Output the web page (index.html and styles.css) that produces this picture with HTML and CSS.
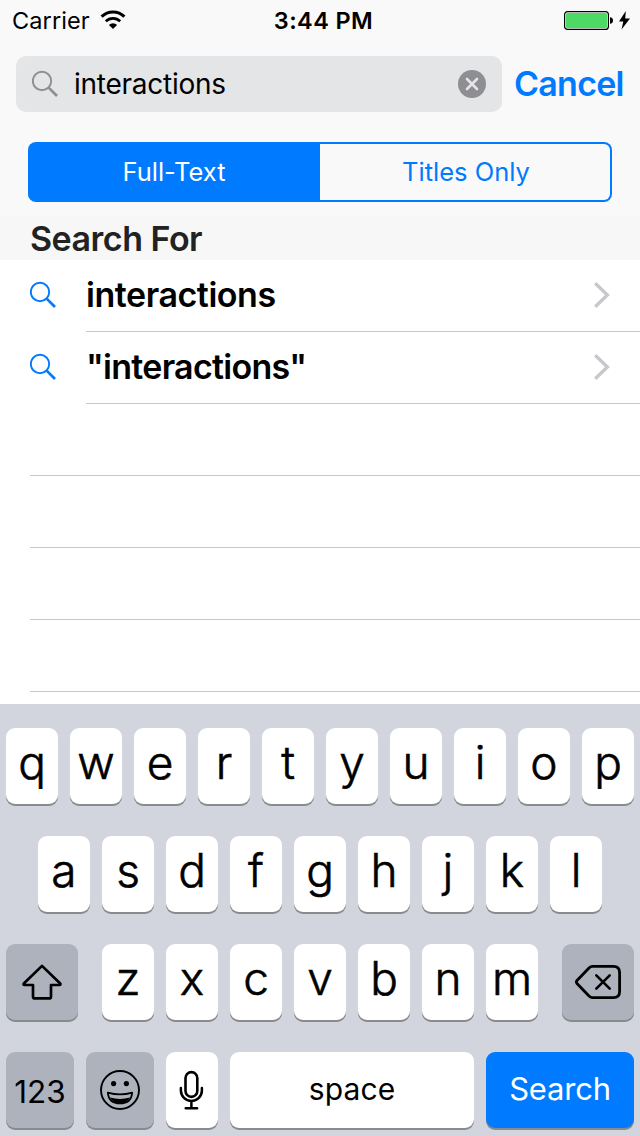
FILE: index.html
```html
<!DOCTYPE html>
<html lang="en">
<head>
<meta charset="utf-8">
<title>Search</title>
<link rel="stylesheet" href="styles.css">
</head>
<body>
<svg width="0" height="0" class="defs">
  <symbol id="magnifier" viewBox="0 0 28 28"><circle cx="10" cy="11" r="9.2" fill="none" stroke="currentColor" stroke-width="1.9"/><path d="M16.4 17.4L25 26" stroke="currentColor" stroke-width="2.7"/></symbol>
  <symbol id="chevron" viewBox="0 0 16 26"><path d="M1.2 1.2L13.4 13L1.2 24.8" fill="none" stroke="currentColor" stroke-width="3.3"/></symbol>
</svg>
<div class="screen">
  <header class="status">
    <div class="status-left"><span class="carrier">Carrier</span>
      <svg class="wifi" width="26" height="20" viewBox="0 0 26 20"><path d="M1.6 6.6A16.2 16.2 0 0 1 24.4 6.6" fill="none" stroke="#000" stroke-width="3"/><path d="M5.8 11.3A10.2 10.2 0 0 1 20.2 11.3" fill="none" stroke="#000" stroke-width="2.7"/><path d="M13 19L8.9 14.9A5.8 5.8 0 0 1 17.1 14.9Z"/></svg>
    </div>
    <div class="time">3:44 PM</div>
    <div class="status-right">
      <svg width="68" height="20" viewBox="0 0 68 20"><rect x=".6" y=".6" width="43.8" height="17.8" rx="3" fill="none" stroke="#000" stroke-width="1.2"/><rect x="2" y="2" width="41" height="15" rx="1.6" fill="#4cd964"/><path d="M46 6.2Q49 6.4 49 9.5T46 12.8Z"/><path d="M61.8 0L55 10.6h4.3L57.5 18.4L66 7.5h-4.8Z"/></svg>
    </div>
  </header>
  <div class="search-bar">
    <div class="field">
      <svg class="glass" width="28" height="28"><use href="#magnifier"/></svg>
      <span class="query">interactions</span>
      <svg width="28" height="28" viewBox="0 0 28 28"><circle cx="14" cy="14" r="14" fill="#8e8e93"/><path d="M9 9L19 19M19 9L9 19" stroke="#e4e5e7" stroke-width="2.6" stroke-linecap="round"/></svg>
    </div>
    <span class="cancel">Cancel</span>
  </div>
  <div class="segments">
    <div class="segment selected"><span>Full-Text</span></div>
    <div class="segment"><span>Titles Only</span></div>
  </div>
  <h2 class="section"><span>Search For</span></h2>
  <main class="list">
    <div class="row"><svg class="row-icon" width="28" height="28"><use href="#magnifier"/></svg><div class="cell"><span>interactions</span><svg class="chev" width="16" height="26"><use href="#chevron"/></svg></div></div>
    <div class="row"><svg class="row-icon" width="28" height="28"><use href="#magnifier"/></svg><div class="cell"><span class="quoted">"interactions"</span><svg class="chev" width="16" height="26"><use href="#chevron"/></svg></div></div>
    <div class="row empty"></div><div class="row empty"></div><div class="row empty"></div><div class="row empty"></div>
  </main>
  <div class="keyboard">
    <div class="keys"><b>q</b><b>w</b><b>e</b><b>r</b><b>t</b><b>y</b><b>u</b><b>i</b><b>o</b><b>p</b></div>
    <div class="keys"><b>a</b><b>s</b><b>d</b><b>f</b><b>g</b><b>h</b><b>j</b><b>k</b><b>l</b></div>
    <div class="keys spread">
      <b class="gray wide"><svg width="40" height="36" viewBox="0 0 40 36"><path d="M20 1.9L1.8 19.5Q1 21 2.6 21H11V32.4Q11 34.4 13 34.4H27Q29 34.4 29 32.4V21H37.4Q39 21 38.2 19.5Z" fill="none" stroke="#000" stroke-width="2.7" stroke-linejoin="round"/></svg></b>
      <div class="letters"><b>z</b><b>x</b><b>c</b><b>v</b><b>b</b><b>n</b><b>m</b></div>
      <b class="gray wide"><svg width="46" height="34" viewBox="0 0 46 34"><path d="M17.5 1.4H38.5Q44.6 1.4 44.6 7.5V26.5Q44.6 32.6 38.5 32.6H17.5Q15.6 32.6 14 31L2 18.5Q.7 17 2 15.5L14 3Q15.6 1.4 17.5 1.4Z" fill="none" stroke="#000" stroke-width="2.8"/><path d="M21.3 10.3L34.7 23.7M34.7 10.3L21.3 23.7" stroke="#000" stroke-width="2.6" stroke-linecap="round"/></svg></b>
    </div>
    <div class="keys">
      <b class="gray num"><span>123</span></b>
      <b class="gray emoji"><svg width="40" height="40" viewBox="0 0 40 40"><circle cx="20" cy="20" r="19" fill="none" stroke="#000" stroke-width="1.9"/><circle cx="13.6" cy="13.6" r="2.6"/><circle cx="26.4" cy="13.6" r="2.6"/><path d="M7.8 22.6Q20 26.2 32.2 22.6Q31.4 33.4 20 33.4T7.8 22.6Z" fill="none" stroke="#000" stroke-width="1.7" stroke-linejoin="round"/><path d="M10 27.6Q20 30.2 30 27.6Q27 33.2 20 33.2T10 27.6Z"/></svg></b>
      <b class="mic"><svg width="24" height="40" viewBox="0 0 24 40"><rect x="5.5" y="2.1" width="11.8" height="24.8" rx="5.9" fill="none" stroke="#000" stroke-width="2.6"/><path d="M.9 18V20.5A10.5 10.5 0 0 0 21.9 20.5V18M11.4 31.5V38M5.7 38.3H17.1" fill="none" stroke="#000" stroke-width="2.5" stroke-linecap="round"/></svg></b>
      <b class="space"><span>space</span></b>
      <b class="go"><span>Search</span></b>
    </div>
  </div>
</div>
</body>
</html>
```
FILE: styles.css
```css
* { box-sizing: border-box; }
body { margin: 0; font-family: Inter, "Liberation Sans", sans-serif; color: #000; }
.defs { display: none; }
svg { display: block; flex: none; overflow: visible; }
span { white-space: nowrap; }
.screen { width: 640px; height: 1136px; overflow: hidden; background: #fff; display: flex; flex-direction: column; }
.status { height: 40px; flex: none; background: #f9f9f9; display: grid; grid-template-columns: 1fr auto 1fr; padding: 0 8px 0 12px; line-height: 41px; font-size: 23.5px; }
.status-left { display: flex; gap: 10px; }
.carrier { letter-spacing: .1px; }
.wifi { margin-top: 10px; }
.time { font-weight: 600; letter-spacing: .4px; padding-left: 3px; }
.status-right { display: flex; justify-content: flex-end; padding-top: 11px; }
.search-bar { height: 102px; flex: none; background: #f9f9f9; padding: 16px 16px 0; display: flex; gap: 12px; }
.field { width: 486px; flex: none; height: 56px; border-radius: 10px; background: #e4e5e7; padding: 0 16px; display: flex; align-items: center; }
.glass { color: #8e8e93; margin-right: 14px; }
.query { flex: 1; font-size: 28px; line-height: 56px; height: 56px; letter-spacing: -.25px; }
.cancel { color: #007aff; font-size: 34px; font-weight: 600; line-height: 56px; letter-spacing: -.75px; }
.segments { height: 74px; flex: none; background: #f9f9f9; padding: 0 28px 14px; display: flex; }
.segment { flex: 0 0 292px; border: 2px solid #007aff; border-left: 0; color: #007aff; text-align: center; font-size: 25.5px; line-height: 56px; border-radius: 0 8px 8px 0; padding-left: 2px; }
.segment.selected { background: #007aff; color: #fff; border-radius: 8px 0 0 8px; }
.section { margin: 0; height: 44px; flex: none; background: #f7f7f7; padding-left: 30px; font-size: 34px; line-height: 46px; font-weight: 600; color: #222; letter-spacing: -.5px; }
.list { height: 444px; flex: none; }
.row { height: 72px; padding-left: 30px; display: flex; }
.row-icon { color: #007aff; margin: 21px 28px 0 0; }
.cell { flex: 1; border-bottom: 1px solid #c8c7cc; display: flex; justify-content: space-between; font-size: 34px; font-weight: 600; line-height: 70px; letter-spacing: -.45px; }
.quoted { letter-spacing: -.72px; }
.chev { color: #c7c7cc; margin: 22px 30px 0 0; }
.empty::after { content: ""; flex: 1; border-bottom: 1px solid #c8c7cc; }
.keyboard { flex: 1; background: #d2d5dd; padding: 24px 6px 0; display: flex; flex-direction: column; gap: 32px; }
.keys, .letters { display: flex; justify-content: center; gap: 12px; }
.spread { justify-content: space-between; }
.keys b { width: 52px; height: 76px; border-radius: 9px; background: #fff; box-shadow: 0 2px 0 #888a8d; display: flex; justify-content: center; font-weight: 300; font-size: 46px; line-height: 68px; -webkit-text-stroke: .6px currentColor; }
.keys .gray { background: #aeb2bd; align-items: center; }
.keys .wide { width: 72px; }
.keys .num, .keys .space, .keys .go { font-weight: 400; -webkit-text-stroke: 0; }
.keys .num { width: 68px; font-size: 31.5px; line-height: 76px; padding-top: 3px; }
.keys .emoji { width: 68px; }
.keys .mic { align-items: center; }
.keys .space { width: 244px; font-size: 30px; line-height: 74px; letter-spacing: .1px; }
.keys .go { width: 148px; font-size: 31px; line-height: 74px; letter-spacing: -.2px; background: #007aff; color: #fff; }
```
